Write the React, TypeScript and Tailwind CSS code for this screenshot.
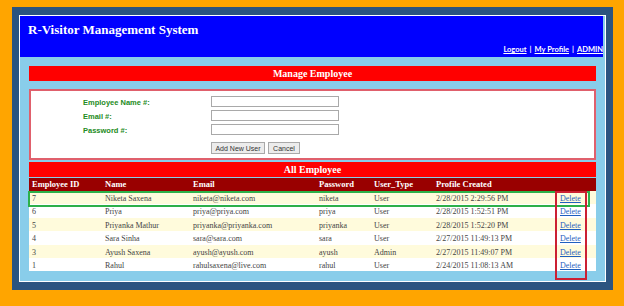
import React from 'react';

const serif = "font-['Liberation_Serif','Times_New_Roman',serif]";

type Employee = {
  id: string;
  name: string;
  email: string;
  password: string;
  type: string;
  created: string;
};

const employees: Employee[] = [
  { id: '7', name: 'Niketa Saxena', email: 'niketa@niketa.com', password: 'niketa', type: 'User', created: '2/28/2015 2:29:56 PM' },
  { id: '6', name: 'Priya', email: 'priya@priya.com', password: 'priya', type: 'User', created: '2/28/2015 1:52:51 PM' },
  { id: '5', name: 'Priyanka Mathur', email: 'priyanka@priyanka.com', password: 'priyanka', type: 'User', created: '2/28/2015 1:52:20 PM' },
  { id: '4', name: 'Sara Sinha', email: 'sara@sara.com', password: 'sara', type: 'User', created: '2/27/2015 11:49:13 PM' },
  { id: '3', name: 'Ayush Saxena', email: 'ayush@ayush.com', password: 'ayush', type: 'Admin', created: '2/27/2015 11:49:07 PM' },
  { id: '1', name: 'Rahul', email: 'rahulsaxena@live.com', password: 'rahul', type: 'User', created: '2/24/2015 11:08:13 AM' },
];

const cols = 'grid grid-cols-[73px_88px_126px_55px_62px_121px_41px]';

const SectionBar: React.FC<{ title: string }> = ({ title }) => (
  <div className={`h-[15px] bg-[#ff0000] flex items-center justify-center text-white font-bold text-[10px] leading-none ${serif}`}>
    {title}
  </div>
);

const Field: React.FC<{ label: string }> = ({ label }) => (
  <>
    <div className="h-[14px] flex items-center pl-[52px] text-[#228b22] font-bold text-[7.5px] font-['Liberation_Sans',Arial,sans-serif]">
      {label}
    </div>
    <div className="h-[14px] flex items-start">
      <input className="w-[128px] h-[11px] border border-solid border-[color:#a9a9a9] bg-white outline-none" />
    </div>
  </>
);

export default function App() {
  return (
    <div className="w-[624px] h-[306px] bg-[#ffa500] pt-[7px] pl-[12px]">
      <div className="w-[601px] h-[283px] bg-[#2b5480] pt-[8px] px-[7px] pb-[8px]">
        <div className="h-full border border-solid border-white bg-[#89cdea] flex flex-col">
          {/* header */}
          <div className="h-[41px] bg-[#0000ff] flex flex-col justify-between mr-[2px] pt-[6px] pb-[2px]">
            <div className="flex">
              <div className="w-2 shrink-0" />
              <h1 className={`text-white font-bold text-[13px] leading-[15px] ${serif}`}>
                R-Visitor Management System
              </h1>
            </div>
            <div className="self-end text-white font-bold text-[7.5px] leading-[10px] font-['Lato','Liberation_Sans',sans-serif] flex gap-[3px]">
              <a className="underline">Logout</a>
              <span>|</span>
              <a className="underline">My Profile</a>
              <span>|</span>
              <a className="underline">ADMIN</a>
            </div>
          </div>

          <div className="px-[9px] pt-[9px] flex flex-col">
            <SectionBar title="Manage Employee" />

            {/* form */}
            <div className="mt-[8px] h-[71px] border-2 border-solid border-[color:#e0606c] bg-white pt-[5px] grid grid-cols-[180px_1fr] content-start">
              <Field label="Employee Name #:" />
              <Field label="Email #:" />
              <Field label="Password #:" />
              <div />
              <div className="mt-[4px] flex gap-[3px] font-['Liberation_Sans',Arial,sans-serif] text-[7px] text-[#333]">
                <button className="w-[54px] h-[12px] border border-solid border-[color:#a9a9a9] bg-[#ececec] leading-none">Add New User</button>
                <button className="w-[32px] h-[12px] border border-solid border-[color:#a9a9a9] bg-[#ececec] leading-none">Cancel</button>
              </div>
            </div>

            <div className="mt-[2px]">
              <SectionBar title="All Employee" />
            </div>

            {/* table */}
            <div className={`relative mt-[1px] ${serif}`}>
              <div className={`${cols} h-[13px] bg-[#990000] text-white font-bold text-[8.5px] items-center`}>
                <div className="pl-[3px]">Employee ID</div>
                <div className="pl-[3px]">Name</div>
                <div className="pl-[3px]">Email</div>
                <div className="pl-[3px]">Password</div>
                <div className="pl-[3px]">User_Type</div>
                <div className="pl-[3px]">Profile Created</div>
                <div />
              </div>
              {employees.map((e, i) => (
                <div
                  key={e.id}
                  className={`${cols} h-[13.4px] items-center pt-[2px] text-[8px] text-[#444] ${i % 2 === 0 ? 'bg-[#fffbdc]' : 'bg-white'}`}
                >
                  <div className="pl-[3px]">{e.id}</div>
                  <div className="pl-[3px]">{e.name}</div>
                  <div className="pl-[3px]">{e.email}</div>
                  <div className="pl-[3px]">{e.password}</div>
                  <div className="pl-[3px]">{e.type}</div>
                  <div className="pl-[3px]">{e.created}</div>
                  <div className="pl-[6px]">
                    <a className="text-[#1f5fbf] underline">Delete</a>
                  </div>
                </div>
              ))}

              {/* annotation boxes */}
              <div className="absolute left-[-1px] top-[13px] w-[562px] h-[16px] border-2 border-solid border-[color:#2db04a]" />
              <div className="absolute left-[526px] top-[13px] w-[32px] h-[89px] border-2 border-solid border-[color:#cc2033]" />
            </div>
          </div>
        </div>
      </div>
    </div>
  );
}
